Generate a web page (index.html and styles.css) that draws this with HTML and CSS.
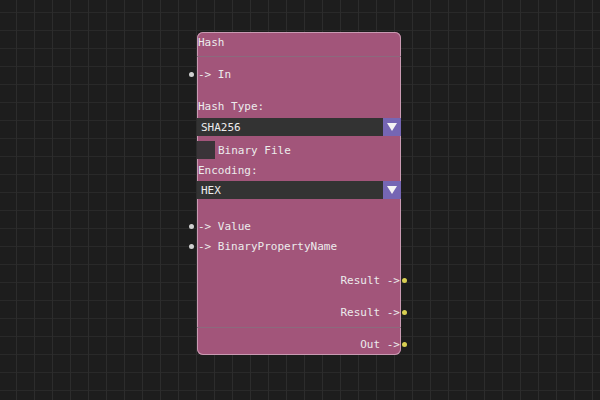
FILE: index.html
```html
<!DOCTYPE html>
<html lang="en">
<head>
    <meta charset="UTF-8">
    <title>Hash Node</title>
    <link rel="stylesheet" href="styles.css">
</head>
<body>

<div class="node">
    <div class="title">Hash</div>

    <div class="row pin-in row-in">-&gt; In</div>

    <div class="row row-label">Hash Type:</div>
    <div class="combo combo-hash">
        <span class="combo-value">SHA256</span>
        <span class="combo-arrow"></span>
    </div>

    <div class="check">
        <span class="check-box"></span>
        <span>Binary File</span>
    </div>

    <div class="row row-enc">Encoding:</div>
    <div class="combo combo-enc">
        <span class="combo-value">HEX</span>
        <span class="combo-arrow"></span>
    </div>

    <div class="row pin-in row-value">-&gt; Value</div>
    <div class="row pin-in row-bpn">-&gt; BinaryPropertyName</div>

    <div class="row pin-out row-res1">Result -&gt;</div>
    <div class="row pin-out row-res2">Result -&gt;</div>

    <div class="footer">
        <div class="row pin-out row-out">Out -&gt;</div>
    </div>
</div>

</body>
</html>
```

FILE: styles.css
```css
/* Canvas */
html, body {
    height: 100%;
}

body {
    margin: 0;
    overflow: hidden;
    font-family: "DejaVu Sans Mono", "Liberation Mono", monospace;
    font-size: 11px;
    color: #ececec;
    background-color: #1d1d1d;
    background-image:
        linear-gradient(to right, #2c2c2c 1px, transparent 1px),
        linear-gradient(to bottom, #292929 1px, transparent 1px);
    background-size: 18px 18px;
    background-position: 16px 12px;
}

/* Node */
.node {
    margin: 32px 0 0 197px;
    width: 204px;
    height: 323px;
    box-sizing: border-box;
    background-color: #a2557a;
    border-radius: 6px;
    box-shadow: inset 0 0 0 1px #c99ab2;
    display: flex;
    flex-direction: column;
}

.title {
    height: 25px;
    line-height: 18px;
    padding: 2px 0 0 1px;
    box-sizing: border-box;
    border-bottom: 1px solid #8b6a7d;
}

.row {
    height: 16px;
    line-height: 18px;
    padding-left: 1px;
    position: relative;
    white-space: nowrap;
}

/* pins */
.pin-in::before,
.pin-out::after {
    content: "";
    position: absolute;
    top: 6px;
    width: 5px;
    height: 5px;
    border-radius: 50%;
}

.pin-in::before {
    left: -8px;
    background-color: #cfcfcf;
}

.pin-out {
    text-align: right;
    padding: 0 1px 0 0;
}

.pin-out::after {
    right: -6px;
    background-color: #d8cf52;
}

.row-in { margin-top: 9px; }
.row-label { margin-top: 16px; }
.row-enc { margin-top: 3px; }
.row-value { margin-top: 19px; }
.row-bpn { margin-top: 4px; }
.row-res1 { margin-top: 18px; }
.row-res2 { margin-top: 16px; }

/* combo boxes */
.combo {
    height: 18px;
    display: flex;
    background-color: #333333;
}

.combo-hash { margin-top: 4px; }
.combo-enc { margin-top: 3px; }

.combo-value {
    flex: 1;
    line-height: 19px;
    padding-left: 4px;
}

.combo-arrow {
    width: 18px;
    background-color: #7566b4;
    display: flex;
    align-items: center;
    justify-content: center;
}

.combo-arrow::before {
    content: "";
    border-left: 5px solid transparent;
    border-right: 5px solid transparent;
    border-top: 8px solid #f4f4f4;
}

/* checkbox */
.check {
    margin-top: 5px;
    height: 18px;
    line-height: 19px;
    display: flex;
    align-items: center;
    gap: 3px;
}

.check-box {
    width: 18px;
    height: 18px;
    background-color: #3a3438;
}

/* bottom section */
.footer {
    margin-top: 7px;
    border-top: 1px solid #8b6a7d;
    padding-top: 8px;
}
```
